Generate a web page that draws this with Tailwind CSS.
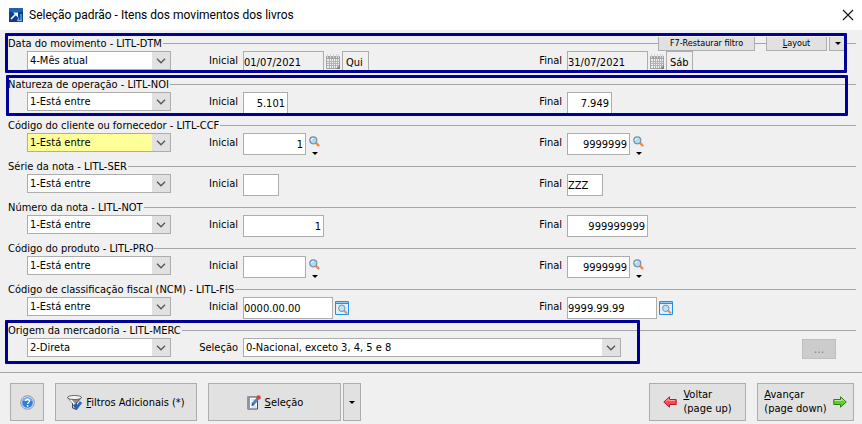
<!DOCTYPE html>
<html lang="pt-BR">
<head>
    <meta charset="UTF-8" />
    <meta name="viewport" content="width=device-width, initial-scale=1.0" />
    <title>Seleção padrão - Itens dos movimentos dos livros</title>
    <script src="https://cdn.jsdelivr.net/npm/@tailwindcss/browser@4"></script>
</head>
<body class="min-h-screen bg-[#f0f0f0] font-['DejaVu_Sans_Condensed','DejaVu_Sans',sans-serif] text-[11px] leading-[15px] text-black">
    <!-- Shared icons -->
    <svg class="hidden">
        <symbol id="chevron" viewBox="0 0 10 6"><path d="M1 .8l4 4 4-4" fill="none" stroke="#555" stroke-width="1.3"/></symbol>
        <symbol id="caret" viewBox="0 0 6 3"><path d="M0 0h6L3 3z" fill="#000"/></symbol>
        <symbol id="lens" viewBox="0 0 11 11">
            <path d="M7.200 7.200l2.200 2.200" stroke="#f08c4a" stroke-width="2.400" stroke-linecap="round"/>
            <circle cx="4.300" cy="4.300" r="3.500" fill="#a9dcf8" stroke="#7c8ea3" stroke-width="1.200"/>
            <path d="M2.300 4.300a2 2 0 012-2" stroke="#fff" fill="none"/>
        </symbol>
        <symbol id="calendar" viewBox="0 0 15 16">
            <path d="M0 2h14v13H0z" fill="#a3a3a3"/>
            <path d="M1 5h12v9H1z" fill="#f0f0f0"/>
            <path d="M1 7.500h12M1 9.500h12M1 11.500h12M3.500 5v9M5.500 5v9M7.500 5v9M9.500 5v9M11.500 5v9" stroke="#b4b4b4"/>
            <path d="M1.500 0v4M4.500 0v4M7.500 0v4M10.500 0v4M12.500 0v4" stroke="#d4d4d4"/>
            <path d="M10 15h4v-4z" fill="#808080"/>
        </symbol>
        <symbol id="lookup" viewBox="0 0 14 14">
            <path d="M.5.5h13v13H.5z" fill="#e6ecf8" stroke="#1e90f0"/>
            <path d="M1 1h12v1H1z" fill="#8cc8fa"/>
            <path d="M1 2.500h12" stroke="#1e90f0"/>
            <path d="M9 9.500l3 3" stroke="#f08c4a" stroke-width="2"/>
            <circle cx="6.800" cy="7.300" r="3.200" fill="#b8e4fa" stroke="#7c8ea3"/>
        </symbol>
    </svg>

    <!-- Title bar -->
    <header class="flex h-[30px] items-center bg-white pr-2 pl-[9px]">
        <svg class="h-[14px] w-[14px]" viewBox="0 0 14 14">
            <path d="M0 0h14v14H0z" fill="#0b3f86"/>
            <path d="M0 0h14v4H0z" fill="#1c62b5"/>
            <path d="M2 11l5-5" stroke="#fff" stroke-width="1.6"/>
            <path d="M4 4.500h5v5z" fill="#fff"/>
            <path d="M9.500 13V9.500M12 13V6M8 12.500h5" stroke="#7fa9dc" stroke-width="1.300"/>
        </svg>
        <h1 class="ml-[6px] flex-1 font-[Roboto,sans-serif] text-[12px]">Seleção padrão - Itens dos movimentos dos livros</h1>
        <button aria-label="Fechar">
            <svg class="h-[12px] w-[12px]" viewBox="0 0 12 12"><path d="M1 1l10 10M11 1L1 11" stroke="#111" stroke-width="1.100"/></svg>
        </button>
    </header>

    <main class="pt-[6px] pr-[6px] pb-2 pl-2">
        <!-- Data do movimento -->
        <section class="relative h-[41px]">
            <div class="flex h-[15px] items-center">
                <h2>Data do movimento - LITL-DTM</h2>
                <div class="ml-px h-px flex-1 bg-[#a5a5a5]"></div>
                <button class="h-[14px] w-[97px] border border-t-0 border-[#adadad] bg-[#e1e1e1] text-[9px] leading-[13px]">F7-Restaurar filtro</button>
                <div class="h-px w-[11px] bg-[#a5a5a5]"></div>
                <button class="h-[14px] w-[61px] border border-t-0 border-[#adadad] bg-[#e1e1e1] text-[9px] leading-[13px]"><u>L</u>ayout</button>
                <button class="ml-[2px] flex h-[14px] w-[18px] items-center justify-center border border-t-0 border-[#adadad] bg-[#e1e1e1]" aria-label="Opções de layout"><svg class="h-[3px] w-[6px]"><use href="#caret"/></svg></button>
                <div class="h-px w-[9px] bg-[#a5a5a5]"></div>
            </div>
            <div class="grid grid-cols-[144px_62px_291px_23px_1fr] items-start gap-x-[5px] pl-[19px]">
                <div class="relative">
                    <select class="block h-[19px] w-full appearance-none border border-[#adadad] bg-white pl-[2px] leading-[17px]" aria-label="Data do movimento"><option>4-Mês atual</option></select>
                    <span class="pointer-events-none absolute top-px right-px flex h-[17px] w-[18px] items-center justify-center bg-[#e1e1e1]"><svg class="h-[6px] w-[10px]"><use href="#chevron"/></svg></span>
                </div>
                <label for="dtmIni" class="text-right leading-[19px]">Inicial</label>
                <div class="flex">
                    <input id="dtmIni" class="h-[22px] w-[81px] border border-[#adadad] bg-[#f0f0f0]" value="01/07/2021">
                    <svg class="mt-[3px] ml-[2px] h-[16px] w-[15px]"><use href="#calendar"/></svg>
                    <input class="ml-px h-[22px] w-[27px] border border-[#adadad] bg-[#f0f0f0] pl-[3px]" value="Qui" aria-label="Dia da semana inicial" readonly>
                </div>
                <label for="dtmFim" class="text-right leading-[19px]">Final</label>
                <div class="flex">
                    <input id="dtmFim" class="h-[22px] w-[81px] border border-[#adadad] bg-[#f0f0f0]" value="31/07/2021">
                    <svg class="mt-[3px] ml-[2px] h-[16px] w-[15px]"><use href="#calendar"/></svg>
                    <input class="ml-px h-[22px] w-[27px] border border-[#adadad] bg-[#f0f0f0] pl-[3px]" value="Sáb" aria-label="Dia da semana final" readonly>
                </div>
            </div>
            <div class="pointer-events-none absolute -top-[3px] right-[9px] -left-[3px] h-[40px] rounded-[1px] border-3 border-[#000099]"></div>
        </section>

        <!-- Natureza de operação -->
        <section class="relative h-[41px]">
            <div class="flex h-[15px] items-center">
                <h2>Natureza de operação - LITL-NOI</h2>
                <div class="ml-px h-px flex-1 bg-[#a5a5a5]"></div>
            </div>
            <div class="grid grid-cols-[144px_62px_291px_23px_1fr] items-start gap-x-[5px] pl-[19px]">
                <div class="relative">
                    <select class="block h-[19px] w-full appearance-none border border-[#adadad] bg-white pl-[2px] leading-[17px]" aria-label="Natureza de operação"><option>1-Está entre</option></select>
                    <span class="pointer-events-none absolute top-px right-px flex h-[17px] w-[18px] items-center justify-center bg-[#e1e1e1]"><svg class="h-[6px] w-[10px]"><use href="#chevron"/></svg></span>
                </div>
                <label for="noiIni" class="text-right leading-[19px]">Inicial</label>
                <input id="noiIni" class="h-[22px] w-[45px] border border-[#adadad] bg-white pr-[2px] text-right" value="5.101">
                <label for="noiFim" class="text-right leading-[19px]">Final</label>
                <input id="noiFim" class="h-[22px] w-[45px] border border-[#adadad] bg-white pr-[2px] text-right" value="7.949">
            </div>
            <div class="pointer-events-none absolute -top-[2px] right-2 -left-[2px] h-[41px] rounded-[1px] border-3 border-[#000099]"></div>
        </section>

        <!-- Código do cliente ou fornecedor -->
        <section class="h-[41px]">
            <div class="flex h-[15px] items-center">
                <h2>Código do cliente ou fornecedor - LITL-CCF</h2>
                <div class="ml-px h-px flex-1 bg-[#a5a5a5]"></div>
            </div>
            <div class="grid grid-cols-[144px_62px_291px_23px_1fr] items-start gap-x-[5px] pl-[19px]">
                <div class="relative">
                    <select class="block h-[19px] w-full appearance-none border border-[#adadad] bg-[#ffff99] pl-[2px] leading-[17px]" aria-label="Código do cliente ou fornecedor"><option>1-Está entre</option></select>
                    <span class="pointer-events-none absolute top-px right-px flex h-[17px] w-[18px] items-center justify-center bg-[#e1e1e1]"><svg class="h-[6px] w-[10px]"><use href="#chevron"/></svg></span>
                </div>
                <label for="ccfIni" class="text-right leading-[19px]">Inicial</label>
                <div class="flex">
                    <input id="ccfIni" class="h-[22px] w-[63px] border border-[#adadad] bg-white pr-[2px] text-right" value="1">
                    <button class="ml-[3px] flex flex-col items-center gap-[5px] pt-[3px]" aria-label="Pesquisar"><svg class="h-[11px] w-[11px]"><use href="#lens"/></svg><svg class="h-[3px] w-[6px]"><use href="#caret"/></svg></button>
                </div>
                <label for="ccfFim" class="text-right leading-[19px]">Final</label>
                <div class="flex">
                    <input id="ccfFim" class="h-[22px] w-[63px] border border-[#adadad] bg-white pr-[2px] text-right" value="9999999">
                    <button class="ml-[3px] flex flex-col items-center gap-[5px] pt-[3px]" aria-label="Pesquisar"><svg class="h-[11px] w-[11px]"><use href="#lens"/></svg><svg class="h-[3px] w-[6px]"><use href="#caret"/></svg></button>
                </div>
            </div>
        </section>

        <!-- Série da nota -->
        <section class="h-[41px]">
            <div class="flex h-[15px] items-center">
                <h2>Série da nota - LITL-SER</h2>
                <div class="ml-px h-px flex-1 bg-[#a5a5a5]"></div>
            </div>
            <div class="grid grid-cols-[144px_62px_291px_23px_1fr] items-start gap-x-[5px] pl-[19px]">
                <div class="relative">
                    <select class="block h-[19px] w-full appearance-none border border-[#adadad] bg-white pl-[2px] leading-[17px]" aria-label="Série da nota"><option>1-Está entre</option></select>
                    <span class="pointer-events-none absolute top-px right-px flex h-[17px] w-[18px] items-center justify-center bg-[#e1e1e1]"><svg class="h-[6px] w-[10px]"><use href="#chevron"/></svg></span>
                </div>
                <label for="serIni" class="text-right leading-[19px]">Inicial</label>
                <input id="serIni" class="h-[22px] w-[36px] border border-[#adadad] bg-white">
                <label for="serFim" class="text-right leading-[19px]">Final</label>
                <input id="serFim" class="h-[22px] w-[36px] border border-[#adadad] bg-white" value="ZZZ">
            </div>
        </section>

        <!-- Número da nota -->
        <section class="h-[41px]">
            <div class="flex h-[15px] items-center">
                <h2>Número da nota - LITL-NOT</h2>
                <div class="ml-px h-px flex-1 bg-[#a5a5a5]"></div>
            </div>
            <div class="grid grid-cols-[144px_62px_291px_23px_1fr] items-start gap-x-[5px] pl-[19px]">
                <div class="relative">
                    <select class="block h-[19px] w-full appearance-none border border-[#adadad] bg-white pl-[2px] leading-[17px]" aria-label="Número da nota"><option>1-Está entre</option></select>
                    <span class="pointer-events-none absolute top-px right-px flex h-[17px] w-[18px] items-center justify-center bg-[#e1e1e1]"><svg class="h-[6px] w-[10px]"><use href="#chevron"/></svg></span>
                </div>
                <label for="notIni" class="text-right leading-[19px]">Inicial</label>
                <input id="notIni" class="h-[22px] w-[81px] border border-[#adadad] bg-white pr-[2px] text-right" value="1">
                <label for="notFim" class="text-right leading-[19px]">Final</label>
                <input id="notFim" class="h-[22px] w-[81px] border border-[#adadad] bg-white pr-[2px] text-right" value="999999999">
            </div>
        </section>

        <!-- Código do produto -->
        <section class="h-[41px]">
            <div class="flex h-[15px] items-center">
                <h2>Código do produto - LITL-PRO</h2>
                <div class="ml-px h-px flex-1 bg-[#a5a5a5]"></div>
            </div>
            <div class="grid grid-cols-[144px_62px_291px_23px_1fr] items-start gap-x-[5px] pl-[19px]">
                <div class="relative">
                    <select class="block h-[19px] w-full appearance-none border border-[#adadad] bg-white pl-[2px] leading-[17px]" aria-label="Código do produto"><option>1-Está entre</option></select>
                    <span class="pointer-events-none absolute top-px right-px flex h-[17px] w-[18px] items-center justify-center bg-[#e1e1e1]"><svg class="h-[6px] w-[10px]"><use href="#chevron"/></svg></span>
                </div>
                <label for="proIni" class="text-right leading-[19px]">Inicial</label>
                <div class="flex">
                    <input id="proIni" class="h-[22px] w-[63px] border border-[#adadad] bg-white pr-[2px] text-right">
                    <button class="ml-[3px] flex flex-col items-center gap-[5px] pt-[3px]" aria-label="Pesquisar"><svg class="h-[11px] w-[11px]"><use href="#lens"/></svg><svg class="h-[3px] w-[6px]"><use href="#caret"/></svg></button>
                </div>
                <label for="proFim" class="text-right leading-[19px]">Final</label>
                <div class="flex">
                    <input id="proFim" class="h-[22px] w-[63px] border border-[#adadad] bg-white pr-[2px] text-right" value="9999999">
                    <button class="ml-[3px] flex flex-col items-center gap-[5px] pt-[3px]" aria-label="Pesquisar"><svg class="h-[11px] w-[11px]"><use href="#lens"/></svg><svg class="h-[3px] w-[6px]"><use href="#caret"/></svg></button>
                </div>
            </div>
        </section>

        <!-- Classificação fiscal -->
        <section class="h-[41px]">
            <div class="flex h-[15px] items-center">
                <h2>Código de classificação fiscal (NCM) - LITL-FIS</h2>
                <div class="ml-px h-px flex-1 bg-[#a5a5a5]"></div>
            </div>
            <div class="grid grid-cols-[144px_62px_291px_23px_1fr] items-start gap-x-[5px] pl-[19px]">
                <div class="relative">
                    <select class="block h-[19px] w-full appearance-none border border-[#adadad] bg-white pl-[2px] leading-[17px]" aria-label="Código de classificação fiscal (NCM)"><option>1-Está entre</option></select>
                    <span class="pointer-events-none absolute top-px right-px flex h-[17px] w-[18px] items-center justify-center bg-[#e1e1e1]"><svg class="h-[6px] w-[10px]"><use href="#chevron"/></svg></span>
                </div>
                <label for="fisIni" class="text-right leading-[19px]">Inicial</label>
                <div class="flex items-center">
                    <input id="fisIni" class="h-[22px] w-[90px] border border-[#adadad] bg-white" value="0000.00.00">
                    <button class="ml-[2px]" aria-label="Pesquisar NCM"><svg class="h-[14px] w-[14px]"><use href="#lookup"/></svg></button>
                </div>
                <label for="fisFim" class="text-right leading-[19px]">Final</label>
                <div class="flex items-center">
                    <input id="fisFim" class="h-[22px] w-[90px] border border-[#adadad] bg-white" value="9999.99.99">
                    <button class="ml-[2px]" aria-label="Pesquisar NCM"><svg class="h-[14px] w-[14px]"><use href="#lookup"/></svg></button>
                </div>
            </div>
        </section>

        <!-- Origem da mercadoria -->
        <section class="relative h-[41px]">
            <div class="flex h-[15px] items-center">
                <h2>Origem da mercadoria - LITL-MERC</h2>
                <div class="ml-px h-px flex-1 bg-[#a5a5a5]"></div>
            </div>
            <div class="grid grid-cols-[144px_62px_378px_1fr] items-start gap-x-[5px] pl-[19px]">
                <div class="relative">
                    <select class="block h-[19px] w-full appearance-none border border-[#adadad] bg-white pl-[2px] leading-[17px]" aria-label="Origem da mercadoria"><option>2-Direta</option></select>
                    <span class="pointer-events-none absolute top-px right-px flex h-[17px] w-[18px] items-center justify-center bg-[#e1e1e1]"><svg class="h-[6px] w-[10px]"><use href="#chevron"/></svg></span>
                </div>
                <label for="selecao" class="text-right leading-[19px]">Seleção</label>
                <div class="relative">
                    <select id="selecao" class="block h-[19px] w-full appearance-none border border-[#adadad] bg-white pl-[2px] leading-[17px]"><option>0-Nacional, exceto 3, 4, 5 e 8</option></select>
                    <span class="pointer-events-none absolute top-px right-px flex h-[17px] w-[18px] items-center justify-center bg-[#e1e1e1]"><svg class="h-[6px] w-[10px]"><use href="#chevron"/></svg></span>
                </div>
                <button class="mt-px mr-5 h-[20px] w-[34px] justify-self-end border border-[#bfbfbf] bg-[#cccccc] text-[12px] text-[#838383]" disabled>...</button>
            </div>
            <div class="pointer-events-none absolute -top-[3px] -left-[3px] h-[44px] w-[635px] rounded-[1px] border-3 border-[#000099]"></div>
        </section>
    </main>

    <!-- Footer buttons -->
    <footer class="flex border-t border-[#a5a5a5] pt-[10px] pr-2 pl-[10px]">
        <button class="flex h-[38px] w-[34px] items-center justify-center border border-[#adadad] bg-[#e1e1e1]" aria-label="Ajuda">
            <svg class="h-[15px] w-[15px]" viewBox="0 0 15 15">
                <circle cx="7.500" cy="7.500" r="6.800" fill="#d5dce6" stroke="#8d98a8"/>
                <circle cx="7.500" cy="7.500" r="5.300" fill="#2f7fd8"/>
                <path d="M3 6a4.700 4.700 0 019 0z" fill="#7db8f2"/>
                <path d="M5.700 6a1.800 1.800 0 113 1.400c-.8.6-1.100.8-1.100 1.600" fill="none" stroke="#fff" stroke-width="1.300"/>
                <circle cx="7.600" cy="10.800" r=".9" fill="#fff"/>
            </svg>
        </button>
        <button class="ml-[11px] flex h-[38px] w-[142px] items-center justify-center gap-1 border border-[#adadad] bg-[#e1e1e1]">
            <svg class="h-[15px] w-[15px]" viewBox="0 0 15 15">
                <path d="M.5 2.500l5 5.500v5l4 1.500V8l5-5.500z" fill="#8e8e8e" stroke="#444" stroke-width=".9"/>
                <path d="M3 4l4 4.500v4" fill="none" stroke="#fff" stroke-width="1.600"/>
                <ellipse cx="7.500" cy="2.500" rx="7" ry="2" fill="#f4f4f4" stroke="#555" stroke-width=".9"/>
                <path d="M7 9.500l2.500 3.500L14 7" fill="none" stroke="#1c66c8" stroke-width="2.800"/>
            </svg>
            <span><u>F</u>iltros Adicionais (*)</span>
        </button>
        <button class="ml-[11px] flex h-[38px] w-[133px] items-center justify-center gap-1 border border-[#adadad] bg-[#e1e1e1]">
            <svg class="h-[15px] w-[15px]" viewBox="0 0 15 15">
                <path d="M1.500 2h10v12h-10z" fill="#fff" stroke="#3c4654"/>
                <path d="M1 1.500h3V14H1z" fill="#8497b4"/>
                <path d="M5.500 5h5M5.500 7.500h4M5.500 10h4M5.500 12h5" stroke="#b4c4dc"/>
                <path d="M6.500 9.500l5.500-6" stroke="#3f86d2" stroke-width="3"/>
                <path d="M5.500 11l.5-2.500 1.800 1.600z" fill="#333"/>
                <circle cx="12.600" cy="2.400" r="2.200" fill="#e0402c"/>
            </svg>
            <span><u>S</u>eleção</span>
        </button>
        <button class="ml-[2px] flex h-[38px] w-[18px] items-center justify-center border border-[#adadad] bg-[#e1e1e1]" aria-label="Opções de seleção"><svg class="h-[3px] w-[6px]"><use href="#caret"/></svg></button>
        <button class="ml-auto flex h-[38px] w-[97px] items-center justify-center gap-[6px] border border-[#adadad] bg-[#e1e1e1] text-left leading-[14px]">
            <svg class="h-[12px] w-[14px]" viewBox="0 0 14 12"><path d="M.8 6L6.500.8v2.700h6.700v5H6.500v2.700z" fill="#fb4a55" stroke="#c01824"/><path d="M2.800 5.500l3-2.700v1.700h6" fill="none" stroke="#ffa0a6"/></svg>
            <span><u>V</u>oltar<br>(page up)</span>
        </button>
        <button class="ml-[11px] flex h-[38px] w-[97px] items-center justify-center gap-[6px] border border-[#adadad] bg-[#e1e1e1] text-left leading-[14px]">
            <span><u>A</u>vançar<br>(page down)</span>
            <svg class="h-[12px] w-[14px]" viewBox="0 0 14 12"><path d="M13.200 6L7.500.8v2.700H.8v5h6.700v2.700z" fill="#5fcf30" stroke="#2c7d14"/><path d="M1.500 4.500h7V3l3 2.700" fill="none" stroke="#b4f08c"/></svg>
        </button>
    </footer>
</body>
</html>
